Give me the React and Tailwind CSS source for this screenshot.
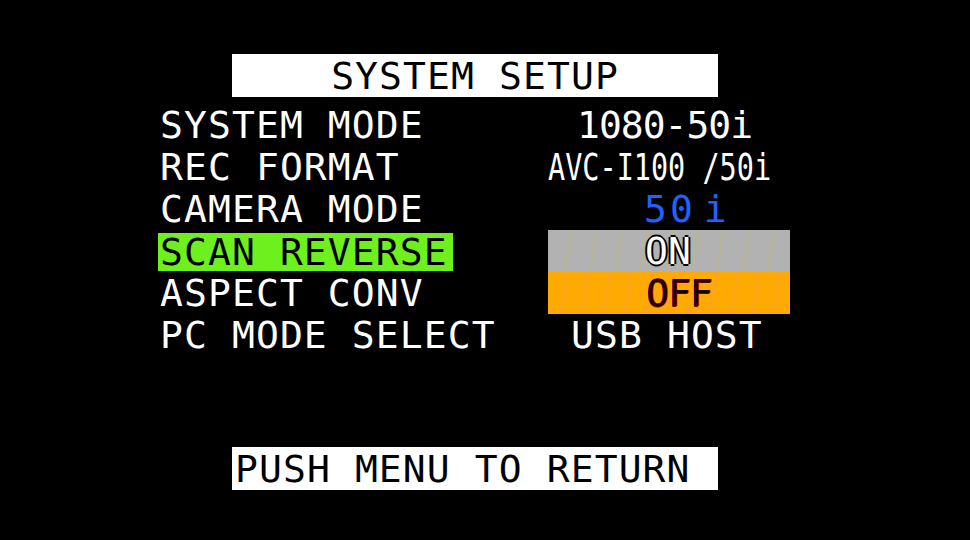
const ROWS = [
  { label: 'SYSTEM MODE', value: '1080-50i', kind: 'plain', pad: 'pl-[29px]', track: 'tracking-[-1px]' },
  { label: 'REC FORMAT', value: 'AVC-I100 /50i', kind: 'narrow' },
  { label: 'CAMERA MODE', value: '50', kind: 'blue' },
  { label: 'SCAN REVERSE', value: 'ON', kind: 'on', active: true },
  { label: 'ASPECT CONV', value: 'OFF', kind: 'off' },
  { label: 'PC MODE SELECT', value: 'USB HOST', kind: 'plain', pad: 'pl-[23px]', track: 'tracking-[1.1px]' },
]

const font = "font-['DejaVu_Sans_Mono',monospace] text-[38px] leading-[42px]"

function Value({ row }) {
  if (row.kind === 'narrow') {
    return (
      <div className="h-[42px] w-[320px] origin-left scale-x-[0.75] whitespace-pre tracking-[0px] text-white">
        AVC-I100 /50i
      </div>
    )
  }
  if (row.kind === 'blue') {
    return (
      <div className="flex h-[42px] pl-[96px] text-[#1f62ff]">
        <span className="tracking-[3px]">50</span>
        <span className="ml-[8px]">i</span>
      </div>
    )
  }
  if (row.kind === 'on') {
    return (
      <div className="h-[42px] bg-[#b2b2b2] bg-[repeating-linear-gradient(100deg,transparent_0px,transparent_22px,rgba(200,190,60,0.35)_23px,transparent_25px)] pl-[97px] tracking-[0px] text-white [text-shadow:-2px_0_#000,2px_0_#000,0_-2px_#000,0_2px_#000]">
        ON
      </div>
    )
  }
  if (row.kind === 'off') {
    return (
      <div className="h-[42px] bg-[#ffaa00] bg-[repeating-linear-gradient(100deg,transparent_0px,transparent_18px,rgba(255,140,150,0.35)_19px,transparent_21px)] pl-[98px] tracking-[-1px] text-[#1a0000] [text-shadow:1px_0_#b00000,0_1px_#700000]">
        OFF
      </div>
    )
  }
  return <div className={`h-[42px] whitespace-pre text-white ${row.pad} ${row.track}`}>{row.value}</div>
}

export default function App() {
  return (
    <div className={`h-[540px] w-[970px] overflow-hidden bg-black ${font}`}>
      {/* header */}
      <div className="ml-[232px] mt-[54px] flex h-[43px] w-[486px] items-center justify-center bg-white tracking-[1.1px] text-black">
        SYSTEM SETUP
      </div>

      {/* menu rows */}
      <div className="mt-[7px] flex flex-col pl-[158px]">
        {ROWS.map(row => (
          <div key={row.label} className="flex h-[42px]">
            <div className="w-[390px]">
              <span
                className={`inline-block whitespace-pre tracking-[1.1px] ${
                  row.active
                    ? 'mt-[3px] h-[38px] bg-[#6ef01e] pl-[2px] pr-[5px] leading-[38px] text-black'
                    : 'pl-[2px] text-white'
                }`}
              >
                {row.label}
              </span>
            </div>
            <div className="w-[242px]">
              <Value row={row} />
            </div>
          </div>
        ))}
      </div>

      {/* footer */}
      <div className="ml-[232px] mt-[91px] flex h-[43px] w-[486px] items-center bg-white pl-[3px] tracking-[1.1px] text-black">
        PUSH MENU TO RETURN
      </div>
    </div>
  )
}
